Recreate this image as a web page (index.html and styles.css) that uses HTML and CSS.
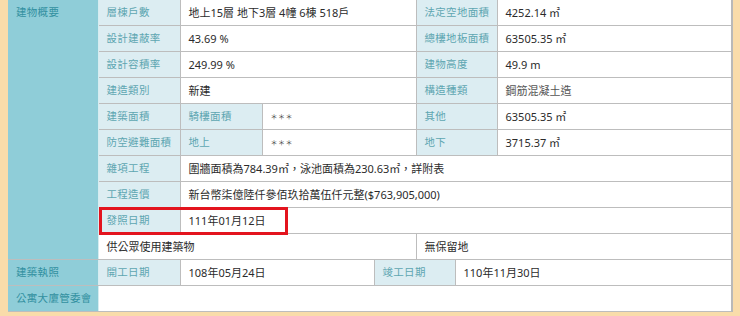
FILE: index.html
```html
<!DOCTYPE html>
<html lang="zh-Hant">
<head>
<meta charset="utf-8">
<link rel="stylesheet" href="styles.css">
</head>
<body>
<div class="frame">
  <table class="info">
    <colgroup>
      <col class="c1"><col class="c2"><col class="c3"><col class="c4"><col class="c5"><col class="c6"><col class="c7"><col class="c8">
    </colgroup>
    <tr>
      <td class="group" rowspan="10">建物概要</td>
      <td class="label">層棟戶數</td>
      <td class="val" colspan="3">地上15層 地下3層 4幢 6棟 518戶</td>
      <td class="label" colspan="2">法定空地面積</td>
      <td class="val">4252.14 ㎡</td>
    </tr>
    <tr>
      <td class="label">設計建蔽率</td>
      <td class="val" colspan="3">43.69 %</td>
      <td class="label" colspan="2">總樓地板面積</td>
      <td class="val">63505.35 ㎡</td>
    </tr>
    <tr>
      <td class="label">設計容積率</td>
      <td class="val" colspan="3">249.99 %</td>
      <td class="label" colspan="2">建物高度</td>
      <td class="val">49.9 m</td>
    </tr>
    <tr>
      <td class="label">建造類別</td>
      <td class="val" colspan="3">新建</td>
      <td class="label" colspan="2">構造種類</td>
      <td class="val soft">鋼筋混凝土造</td>
    </tr>
    <tr>
      <td class="label">建築面積</td>
      <td class="label">騎樓面積</td>
      <td class="val stars" colspan="2">＊＊＊</td>
      <td class="label" colspan="2">其他</td>
      <td class="val">63505.35 ㎡</td>
    </tr>
    <tr>
      <td class="label">防空避難面積</td>
      <td class="label">地上</td>
      <td class="val stars" colspan="2">＊＊＊</td>
      <td class="label" colspan="2">地下</td>
      <td class="val">3715.37 ㎡</td>
    </tr>
    <tr>
      <td class="label">雜項工程</td>
      <td class="val" colspan="6">圍牆面積為784.39㎡，泳池面積為230.63㎡，詳附表</td>
    </tr>
    <tr>
      <td class="label">工程造價</td>
      <td class="val" colspan="6">新台幣柒億陸仟參佰玖拾萬伍仟元整($763,905,000)</td>
    </tr>
    <tr>
      <td class="label">發照日期</td>
      <td class="val" colspan="6">111年01月12日</td>
    </tr>
    <tr>
      <td class="val" colspan="4">供公眾使用建築物</td>
      <td class="val" colspan="3">無保留地</td>
    </tr>
    <tr>
      <td class="group">建築執照</td>
      <td class="label">開工日期</td>
      <td class="val" colspan="2">108年05月24日</td>
      <td class="label" colspan="2">竣工日期</td>
      <td class="val" colspan="2">110年11月30日</td>
    </tr>
    <tr>
      <td class="group">公寓大廈管委會</td>
      <td class="val" colspan="7"></td>
    </tr>
  </table>
  <div class="highlight"></div>
</div>
</body>
</html>
```

FILE: styles.css
```css
html, body {
  margin: 0;
  padding: 0;
  background: #f9dcaa;
}
body {
  width: 740px;
  height: 316px;
  overflow: hidden;
  font-family: "Noto Sans", "Noto Sans CJK TC", sans-serif;
  font-size: 11px;
}
.frame {
  position: relative;
  padding: 0 7px 4px 8px;
}
.info {
  width: 725px;
  table-layout: fixed;
  border-collapse: collapse;
  border-right: 2px solid #b9b9b9;
}
.c1 { width: 90px; }
.c2 { width: 82px; }
.c3 { width: 82px; }
.c4 { width: 112px; }
.c5 { width: 42px; }
.c6 { width: 39px; }
.c7 { width: 42px; }
.c8 { width: 235px; }
.info td {
  height: 25px;
  padding: 0 7px 0 8px;
  border: 1px solid #bdbdbd;
  white-space: nowrap;
  overflow: hidden;
  vertical-align: middle;
  line-height: 25px;
}
.info tr:first-child td {
  border-top: none;
}
.info td.group {
  background: #8fcdd8;
  color: #3290a0;
  vertical-align: top;
  border-color: #d6ecf0;
  border-left: none;
  border-bottom: 1px solid #bdbdbd;
  font-size: 10.5px;
  letter-spacing: 0.3px;
}
.info td.label {
  background: #dcedf2;
  color: #5ea6b1;
  font-size: 10.5px;
  letter-spacing: 0.3px;
}
.info td.val {
  background: #ffffff;
  color: #2b2b2b;
}
.info td.soft {
  color: #555;
}
.info td.stars {
  font-size: 7px;
  color: #444;
  letter-spacing: 0.5px;
}
.highlight {
  position: absolute;
  left: 99px;
  top: 207px;
  width: 189px;
  height: 28px;
  box-sizing: border-box;
  border: 3px solid #e3141e;
}
```
